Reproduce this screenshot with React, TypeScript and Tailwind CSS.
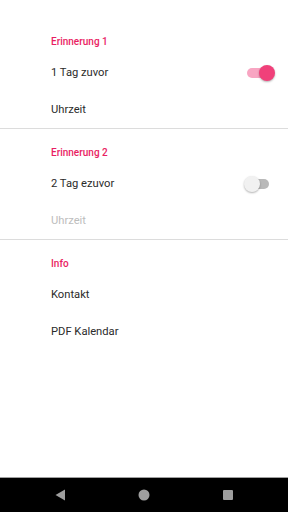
import React from 'react';

function Toggle({ on }: { on: boolean }) {
  return (
    <div className="relative w-[24px] h-[14px] flex items-center">
      <div className={`w-[22px] h-[10px] rounded-full ml-[1px] ${on ? 'bg-[#f8a5c2]' : 'bg-[#b9b9b9]'}`} />
      <div
        className={`absolute top-[-1px] w-[16px] h-[16px] rounded-full shadow-[0_1px_2px_rgba(0,0,0,0.3)] ${
          on ? 'left-[13px] bg-[#f0407a]' : 'left-[-2px] bg-[#f1f1f1]'
        }`}
      />
    </div>
  );
}

function Header({ title }: { title: string }) {
  return (
    <div className="h-[36px] pl-[51px] pt-[16px] text-[10px] leading-[16px] font-medium text-[#e91e63]">
      {title}
    </div>
  );
}

function Row({ label, disabled, toggle }: { label: string; disabled?: boolean; toggle?: boolean }) {
  return (
    <div className="h-[37px] pl-[51px] pr-[16px] pt-[2px] flex items-center justify-between">
      <span className={`text-[11.2px] ${disabled ? 'text-[#bdbdbd]' : 'text-[#2b2b2b]'}`}>{label}</span>
      {toggle !== undefined && (
        <div className="mb-[2px] mr-[2px]">
          <Toggle on={toggle} />
        </div>
      )}
    </div>
  );
}

export default function App() {
  return (
    <div className="w-[288px] h-[512px] flex flex-col bg-white font-['Roboto',sans-serif]">
      <div className="flex-1 pt-[18px]">
        <Header title="Erinnerung 1" />
        <Row label="1 Tag zuvor" toggle={true} />
        <Row label="Uhrzeit" />
        <div className="h-px bg-[#dcdcdc]" />
        <Header title="Erinnerung 2" />
        <Row label="2 Tag ezuvor" toggle={false} />
        <Row label="Uhrzeit" disabled />
        <div className="h-px bg-[#dcdcdc]" />
        <Header title="Info" />
        <Row label="Kontakt" />
        <Row label="PDF Kalendar" />
      </div>
      <div className="h-[35px] bg-black border-t border-[#a0a0a0] flex items-center justify-center gap-[72px]">
        <svg width="12" height="12" viewBox="0 0 12 12">
          <path d="M11 0.5 L11 11.5 L1.5 6 Z" fill="#9e9e9e" />
        </svg>
        <svg width="12" height="12" viewBox="0 0 12 12">
          <circle cx="6" cy="6" r="5.5" fill="#9e9e9e" />
        </svg>
        <svg width="12" height="12" viewBox="0 0 12 12">
          <rect x="1" y="1" width="10" height="10" rx="1" fill="#9e9e9e" />
        </svg>
      </div>
    </div>
  );
}
